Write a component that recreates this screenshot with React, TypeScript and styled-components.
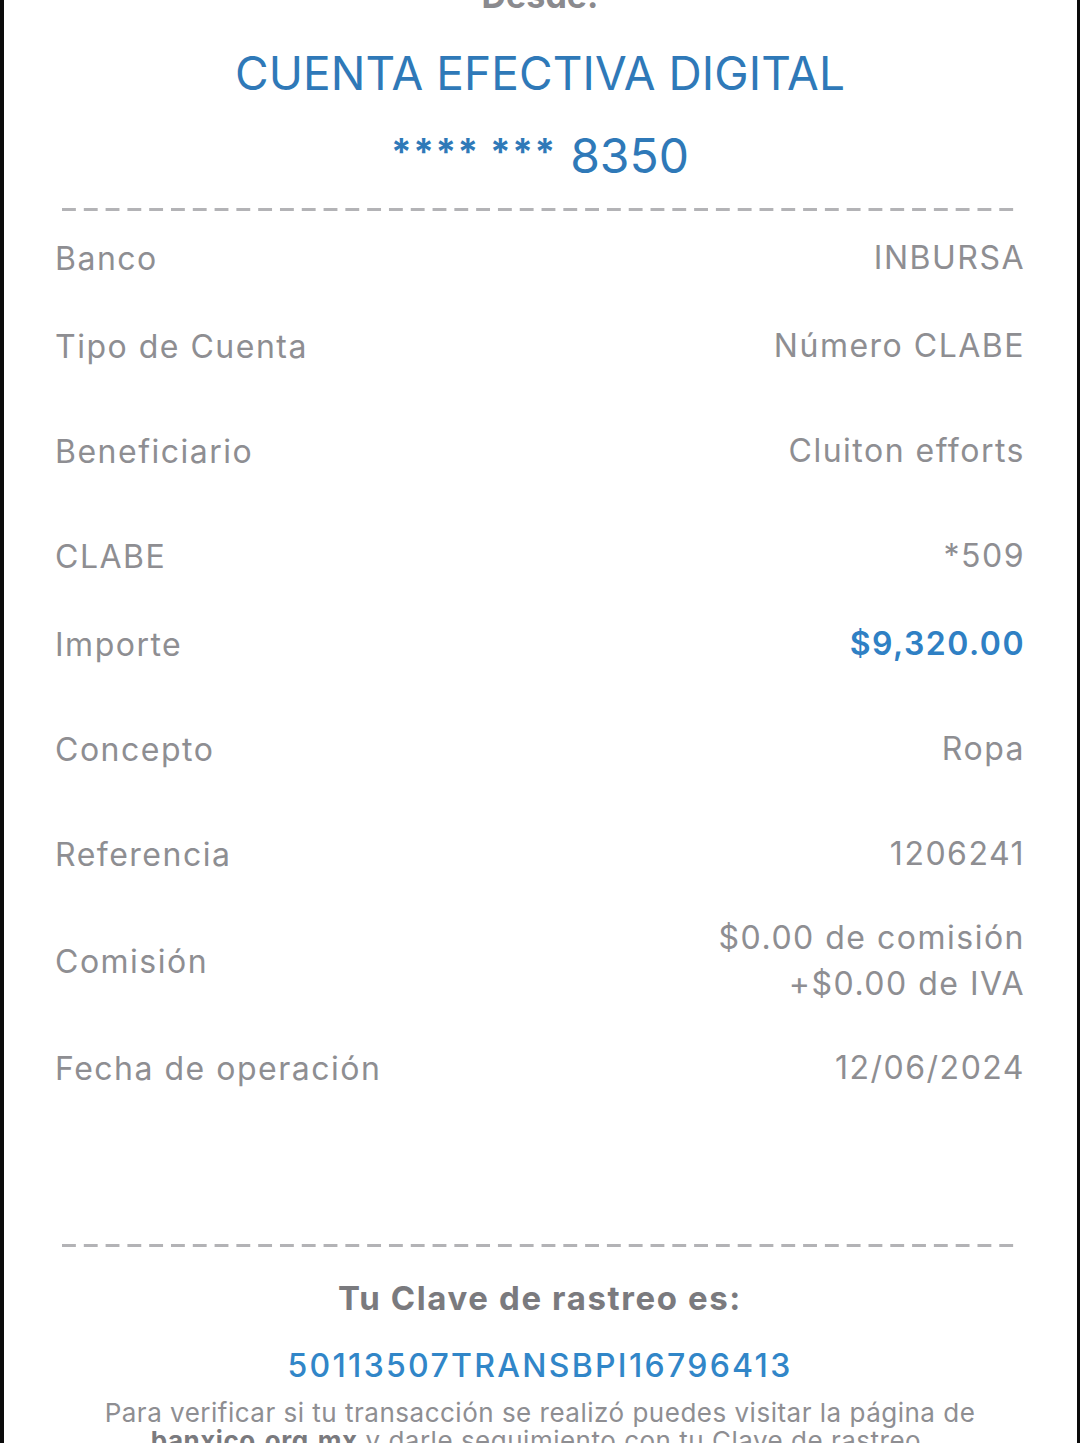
import React from "react";
import styled, { createGlobalStyle } from "styled-components";

const GlobalStyle = createGlobalStyle`
  html, body {
    margin: 0;
    padding: 0;
    background: #0b0b0b;
  }
  body {
    font-family: Inter, "Noto Sans", "Liberation Sans", sans-serif;
    -webkit-font-smoothing: antialiased;
  }
`;

type Detail = {
  label: string;
  value: string[];
  accent?: boolean;
  tight?: boolean;
};

const details: Detail[] = [
  { label: "Banco", value: ["INBURSA"] },
  { label: "Tipo de Cuenta", value: ["Número CLABE"], tight: true },
  { label: "Beneficiario", value: ["Cluiton efforts"] },
  { label: "CLABE", value: ["*509"] },
  { label: "Importe", value: ["$9,320.00"], accent: true, tight: true },
  { label: "Concepto", value: ["Ropa"] },
  { label: "Referencia", value: ["1206241"] },
  { label: "Comisión", value: ["$0.00 de comisión", "+$0.00 de IVA"] },
  { label: "Fecha de operación", value: ["12/06/2024"] },
];

const App = () => {
  return (
    <>
      <GlobalStyle />
      <Screen>
        <From>Desde:</From>
        <AccountName>CUENTA EFECTIVA DIGITAL</AccountName>
        <AccountNumber>
          <span className="mask">**** ***</span> 8350
        </AccountNumber>
        <Dashes />
        <DetailList>
          {details.map((d) => (
            <DetailRow key={d.label} $tight={d.tight}>
              <Label>{d.label}</Label>
              <Value $accent={d.accent}>
                {d.value.map((line) => (
                  <div key={line}>{line}</div>
                ))}
              </Value>
            </DetailRow>
          ))}
        </DetailList>
        <Dashes $bottom />
        <TrackingTitle>Tu Clave de rastreo es:</TrackingTitle>
        <TrackingKey>50113507TRANSBPI16796413</TrackingKey>
        <Note>
          Para verificar si tu transacción se realizó puedes visitar la página de{" "}
          <b>banxico.org.mx</b> y darle seguimiento con tu Clave de rastreo.
        </Note>
      </Screen>
    </>
  );
};

export default App;

const Screen = styled.main`
  box-sizing: border-box;
  height: 1443px;
  margin: 0 3px 0 4px;
  padding: 0 52px 0 51px;
  background: #ffffff;
  overflow: hidden;
  display: flex;
  flex-direction: column;
  align-items: stretch;

  & > * {
    flex-shrink: 0;
  }
`;

const From = styled.div`
  margin-top: -24px;
  height: 40px;
  line-height: 40px;
  text-align: center;
  font-size: 34px;
  font-weight: 700;
  color: #8a8a8e;
`;

const AccountName = styled.div`
  margin-top: 27px;
  text-align: center;
  font-size: 46px;
  line-height: 60px;
  font-weight: 400;
  color: #2f79b8;
  letter-spacing: 0.1px;
`;

const AccountNumber = styled.div`
  margin-top: 24px;
  text-align: center;
  font-size: 48px;
  line-height: 50px;
  color: #2f79b8;

  .mask {
    font-size: 37px;
    font-weight: 700;
    letter-spacing: 1.5px;
    vertical-align: 8px;
  }
`;

const Dashes = styled.div<{ $bottom?: boolean }>`
  margin: ${(p) => (p.$bottom ? "0" : "27px")} 5px 0 7px;
  height: 3px;
  background-image: linear-gradient(
    to right,
    #b3b3b6 0,
    #b3b3b6 14px,
    transparent 14px
  );
  background-size: 21.8px 3px;
  background-repeat: repeat-x;
`;

const DetailList = styled.section`
  display: flex;
  flex-direction: column;
  padding-top: 3px;
  height: 1030px;
`;

const DetailRow = styled.div<{ $tight?: boolean }>`
  display: flex;
  justify-content: space-between;
  align-items: center;
  min-height: 88px;
  margin-top: ${(p) => (p.$tight ? "0" : "17px")};

  &:first-child {
    margin-top: 0;
  }
`;

const Label = styled.div`
  font-size: 32px;
  letter-spacing: 1.5px;
  color: #8e8e92;
`;

const Value = styled.div<{ $accent?: boolean }>`
  text-align: right;
  font-size: 32px;
  line-height: 46px;
  letter-spacing: 1.5px;
  color: ${(p) => (p.$accent ? "#2f80c4" : "#8e8e92")};
  font-weight: ${(p) => (p.$accent ? 600 : 400)};
`;

const TrackingTitle = styled.div`
  margin-top: 29px;
  text-align: center;
  font-size: 33px;
  line-height: 44px;
  font-weight: 700;
  color: #7a7a7e;
  letter-spacing: 1.6px;
`;

const TrackingKey = styled.div`
  margin-top: 24px;
  text-align: center;
  font-size: 32px;
  line-height: 44px;
  font-weight: 500;
  color: #3186c8;
  letter-spacing: 2.3px;
`;

const Note = styled.p`
  margin: 11px 20px 0;
  text-align: center;
  font-size: 26px;
  line-height: 28px;
  color: #8e8e92;
  letter-spacing: 0.5px;

  b {
    font-weight: 700;
    color: #7a7a7e;
  }
`;
